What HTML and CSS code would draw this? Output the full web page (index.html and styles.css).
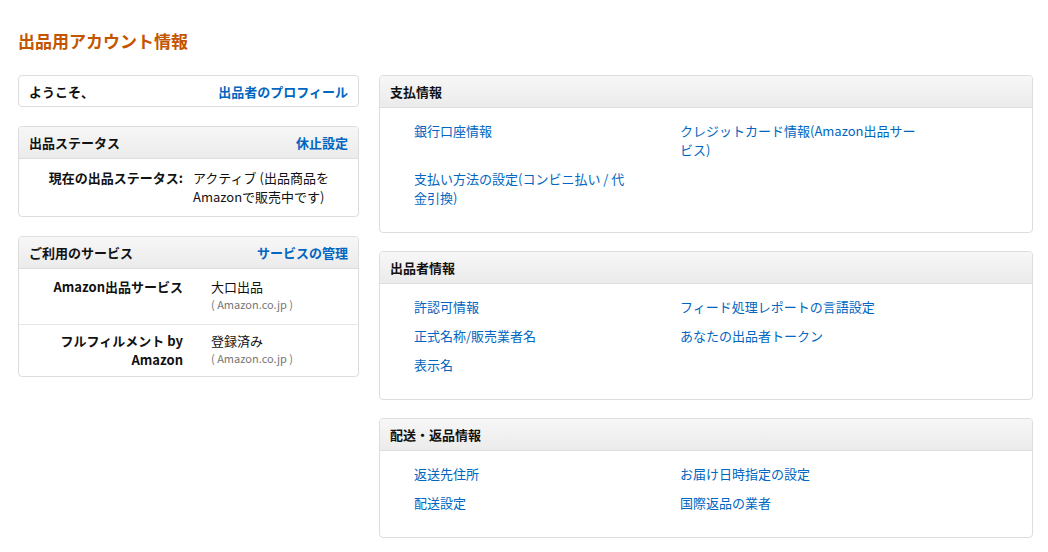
FILE: index.html
```html
<!DOCTYPE html>
<html lang="ja">
<head>
<meta charset="utf-8">
<title>出品用アカウント情報</title>
<link rel="stylesheet" href="styles.css">
</head>
<body>
<div class="page">
  <h1 class="title">出品用アカウント情報</h1>
  <div class="layout">
    <div class="col-left">
      <div class="box welcome">
        <span class="welcome-text">ようこそ、</span>
        <a class="hlink" href="#">出品者のプロフィール</a>
      </div>

      <div class="box">
        <div class="box-head">
          <span>出品ステータス</span>
          <a class="hlink" href="#">休止設定</a>
        </div>
        <div class="status-body">
          <div class="status-label">現在の出品ステータス:</div>
          <div class="status-value">アクティブ (出品商品をAmazonで販売中です)</div>
        </div>
      </div>

      <div class="box">
        <div class="box-head">
          <span>ご利用のサービス</span>
          <a class="hlink" href="#">サービスの管理</a>
        </div>
        <div class="svc-row">
          <div class="svc-label">Amazon出品サービス</div>
          <div class="svc-value">
            <div>大口出品</div>
            <div class="svc-sub">( Amazon.co.jp )</div>
          </div>
        </div>
        <div class="svc-row">
          <div class="svc-label">フルフィルメント by Amazon</div>
          <div class="svc-value">
            <div>登録済み</div>
            <div class="svc-sub">( Amazon.co.jp )</div>
          </div>
        </div>
      </div>
    </div>

    <div class="col-right">
      <div class="box">
        <div class="box-head"><span>支払情報</span></div>
        <div class="links">
          <a href="#">銀行口座情報</a>
          <a href="#">クレジットカード情報(Amazon出品サービス)</a>
          <a href="#">支払い方法の設定(コンビニ払い / 代金引換)</a>
        </div>
      </div>

      <div class="box">
        <div class="box-head"><span>出品者情報</span></div>
        <div class="links">
          <a href="#">許認可情報</a>
          <a href="#">フィード処理レポートの言語設定</a>
          <a href="#">正式名称/販売業者名</a>
          <a href="#">あなたの出品者トークン</a>
          <a href="#">表示名</a>
        </div>
      </div>

      <div class="box">
        <div class="box-head"><span>配送・返品情報</span></div>
        <div class="links">
          <a href="#">返送先住所</a>
          <a href="#">お届け日時指定の設定</a>
          <a href="#">配送設定</a>
          <a href="#">国際返品の業者</a>
        </div>
      </div>
    </div>
  </div>
</div>
</body>
</html>
```

FILE: styles.css
```css
* { box-sizing: border-box; }

html, body {
  margin: 0;
  padding: 0;
  background: #fff;
}

body {
  font-family: "Noto Sans CJK JP", "Noto Sans", sans-serif;
  font-size: 13px;
  line-height: 19px;
  color: #111;
}

a {
  color: #0066c0;
  text-decoration: none;
}

.page {
  padding: 29px 15px 0 18px;
}

.title {
  margin: 0 0 22px 0;
  font-size: 17px;
  line-height: 24px;
  font-weight: bold;
  color: #c45500;
}

.layout {
  display: flex;
  gap: 20px;
  align-items: flex-start;
}

.col-left {
  width: 341px;
  display: flex;
  flex-direction: column;
  gap: 19px;
}

.col-right {
  flex: 1;
  display: flex;
  flex-direction: column;
  gap: 18px;
}

.box {
  border: 1px solid #ddd;
  border-radius: 4px;
  background: #fff;
  overflow: hidden;
}

.welcome {
  display: flex;
  justify-content: space-between;
  align-items: center;
  height: 32px;
  padding: 0 10px;
  font-weight: bold;
}

.hlink {
  font-weight: bold;
}

.box-head {
  display: flex;
  justify-content: space-between;
  align-items: center;
  height: 32px;
  padding: 0 10px;
  background: linear-gradient(to bottom, #f7f7f7, #ebebeb);
  border-bottom: 1px solid #ddd;
  font-weight: bold;
}

.status-body {
  display: flex;
  padding: 9px 12px 10px 24px;
}

.status-label {
  width: 140px;
  text-align: right;
  font-weight: bold;
  white-space: nowrap;
}

.status-value {
  width: 152px;
  margin-left: 10px;
}

.svc-row {
  display: flex;
  padding: 8px 12px 12px 24px;
}

.svc-row + .svc-row {
  border-top: 1px solid #e7e7e7;
  padding-top: 6px;
  padding-bottom: 7px;
}

.svc-label {
  width: 140px;
  text-align: right;
  font-weight: bold;
}

.svc-value {
  margin-left: 28px;
}

.svc-sub {
  font-size: 11px;
  line-height: 16px;
  color: #767676;
}

.links {
  display: grid;
  grid-template-columns: 218px 240px;
  column-gap: 48px;
  row-gap: 10px;
  padding: 13px 20px 25px 34px;
  align-items: start;
}
```
